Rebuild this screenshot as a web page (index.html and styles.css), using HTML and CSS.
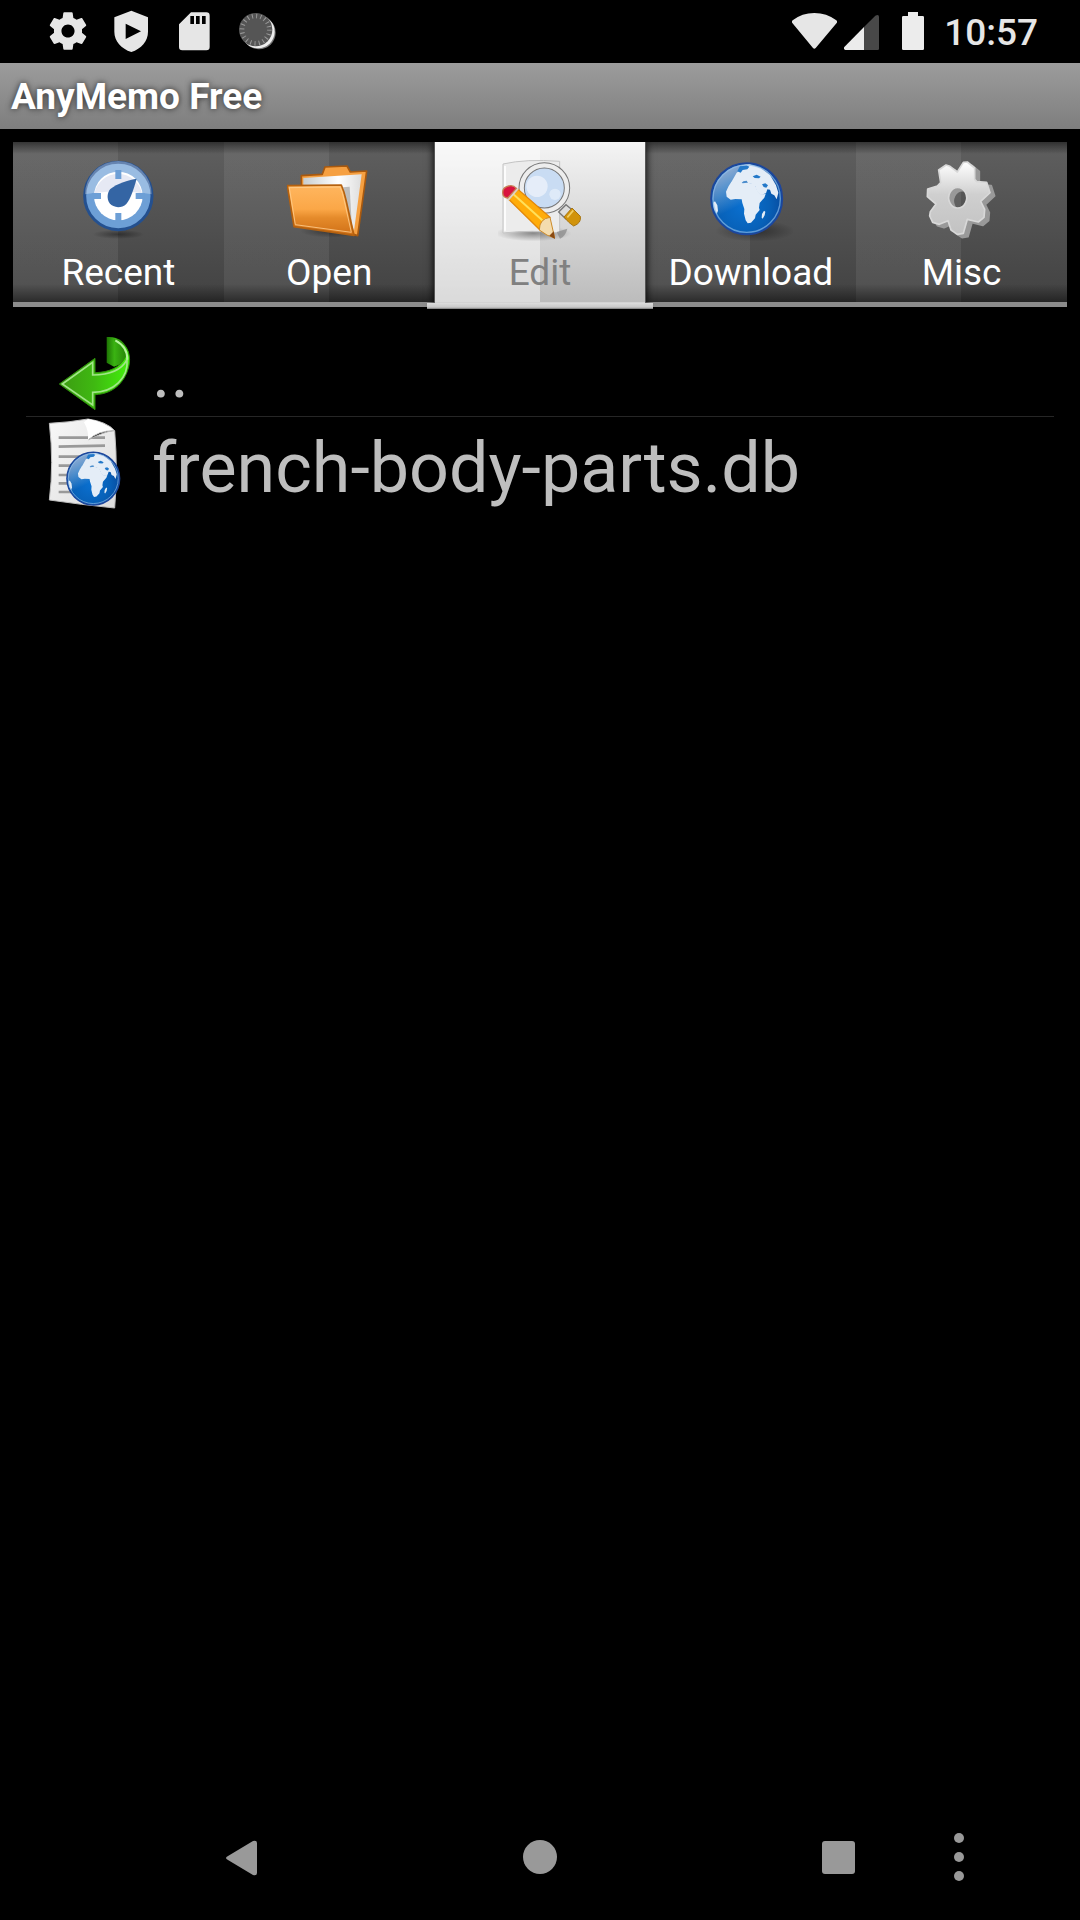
FILE: index.html
```html
<!DOCTYPE html>
<html lang="en">
<head>
<meta charset="utf-8">
<meta name="viewport" content="width=device-width, initial-scale=1">
<title>AnyMemo Free</title>
<link rel="stylesheet" href="styles.css">
</head>
<body>
<svg class="defs" width="0" height="0" aria-hidden="true">
  <defs>
    <radialGradient id="sea" cx="0.45" cy="0.6" r="0.6">
      <stop offset="0" stop-color="#0a70d0"/><stop offset="0.6" stop-color="#0861b8"/><stop offset="1" stop-color="#07479b"/>
    </radialGradient>
    <linearGradient id="gloss" x1="0.1" y1="0" x2="0.4" y2="0.6">
      <stop offset="0" stop-color="#fff" stop-opacity="0.65"/><stop offset="1" stop-color="#fff" stop-opacity="0"/>
    </linearGradient>
    <symbol id="globe" viewBox="207 81 252 252">
      <circle cx="320" cy="206" r="107" fill="url(#sea)" stroke="#1d469c" stroke-width="5"/>
      <circle cx="320" cy="206" r="103" fill="url(#gloss)"/>
      <path fill="#e4edf7" d="M266 168l8-12 22-3 12 7 14-2 22 4 8 20 10 11 15-1-4 11-14 16-2 14 2 7-12 14-2 11-12 13-10 2-6-9-5-20 1-14-6-18-2-11-19-1-14 2-12-9-2-15z"/>
      <path fill="#e4edf7" d="M366 252l6-10 4 3-2 11-6 10-3-3zM219 218l6-4 7 12 2 16-4 10-8-14zM290 128l12-9 8-5-6-8 24-3 34 11 28 21 18 31 7 22-5 20-7-12-9-5-4-12-8-1-4 12-16 5-12-12-4-14-12-8-10-2-4-7-10 2-6 6-14-2-10 6-8-4z"/>
      <path fill="#2479c9" d="M300 108l20-2 8 4-6 8-14 2-6 8-10-4zM338 139l12-5 12 6-5 5-13-1zM366 163l10-3 8 6-5 7-8-2z"/>
      <circle cx="320" cy="206" r="101" fill="none" stroke="#92bdea" stroke-width="4" opacity="0.65"/>
    </symbol>
    <linearGradient id="orange" x1="0" y1="0" x2="0" y2="1">
      <stop offset="0" stop-color="#ffb65f"/><stop offset="0.48" stop-color="#fba747"/><stop offset="0.65" stop-color="#e58b2b"/><stop offset="1" stop-color="#cf6f16"/>
    </linearGradient>
    <linearGradient id="paper" x1="0" y1="0" x2="1" y2="0">
      <stop offset="0" stop-color="#c9ced0"/><stop offset="0.6" stop-color="#fff"/><stop offset="1" stop-color="#ddd"/>
    </linearGradient>
    <linearGradient id="steel" x1="0" y1="0" x2="0" y2="1">
      <stop offset="0" stop-color="#fff"/><stop offset="0.45" stop-color="#cfcfcf"/><stop offset="1" stop-color="#c2c2c2"/>
    </linearGradient>
    <linearGradient id="green" x1="0" y1="0" x2="1" y2="0">
      <stop offset="0" stop-color="#3c9a13"/><stop offset="0.5" stop-color="#3fb911"/><stop offset="1" stop-color="#43f00c"/>
    </linearGradient>
    <linearGradient id="greenback" x1="0" y1="0" x2="1" y2="0">
      <stop offset="0" stop-color="#1d7404"/><stop offset="0.35" stop-color="#3ab312"/><stop offset="1" stop-color="#247d08"/>
    </linearGradient>
    <linearGradient id="sheet" x1="0" y1="0" x2="1" y2="1">
      <stop offset="0" stop-color="#f8f8f8"/><stop offset="1" stop-color="#dcdcdc"/>
    </linearGradient>
    <radialGradient id="shade">
      <stop offset="0" stop-color="#000" stop-opacity="0.4"/><stop offset="1" stop-color="#000" stop-opacity="0"/>
    </radialGradient>
  </defs>
</svg>

<div class="status">
  <div class="notices">
    <svg class="notice" viewBox="0.8 0.8 22.4 22.4" aria-hidden="true"><path fill="#e6e6e6" d="M19.43 12.98c.04-.32.07-.64.07-.98s-.03-.66-.07-.98l2.11-1.65c.19-.15.24-.42.12-.64l-2-3.46c-.12-.22-.39-.3-.61-.22l-2.49 1c-.52-.4-1.08-.73-1.69-.98l-.38-2.65C14.46 2.18 14.25 2 14 2h-4c-.25 0-.46.18-.49.42l-.38 2.65c-.61.25-1.17.59-1.69.98l-2.49-1c-.23-.09-.49 0-.61.22l-2 3.46c-.13.22-.07.49.12.64l2.11 1.65c-.04.32-.07.65-.07.98s.03.66.07.98l-2.11 1.65c-.19.15-.24.42-.12.64l2 3.46c.12.22.39.3.61.22l2.49-1c.52.4 1.08.73 1.69.98l.38 2.65c.03.24.24.42.49.42h4c.25 0 .46-.18.49-.42l.38-2.65c.61-.25 1.17-.59 1.69-.98l2.49 1c.23.09.49 0 .61-.22l2-3.46c.12-.22.07-.49-.12-.64l-2.11-1.65zM12 15.500c-1.93 0-3.500-1.570-3.500-3.500s1.570-3.500 3.500-3.500 3.500 1.570 3.500 3.500-1.570 3.500-3.500 3.500z"/></svg>
    <svg class="notice" viewBox="330 30 126 126" aria-hidden="true"><path fill="#e6e6e6" fill-rule="evenodd" d="M394 32l50 20v43c0 28-20 51-50 61-30-10-51-33-51-61V52zM377 71v46l46-23z"/></svg>
    <svg class="notice" viewBox="519 30 126 126" aria-hidden="true"><path fill="#e6e6e6" fill-rule="evenodd" d="M573 37h46q10 0 10 10v94q0 10-10 10h-72q-10 0-10-10V73zM571 48v24h11V48zM588 48v24h11V48zM606 48v24h11V48z"/></svg>
    <svg class="notice" viewBox="708 30 126 126" aria-hidden="true"><circle cx="777" cy="98" r="50" fill="#777"/><circle cx="774" cy="95" r="50" fill="#eee"/><circle cx="767" cy="89" r="50" fill="#555"/><circle cx="767" cy="89" r="41" fill="none" stroke="#999" stroke-width="14" stroke-dasharray="3 9.9"/></svg>
  </div>
  <div class="system">
    <svg class="wifi" viewBox="215 30 135 126" aria-hidden="true"><path fill="#e6e6e6" d="M217 61q28-22 65-22t66 22q4 4 1 8l-63 75q-4 5-8 0l-62-75q-3-4 1-8z"/></svg>
    <svg class="signal" viewBox="372 30 105 126" aria-hidden="true"><path fill="#484848" d="M432 81l34-34q11-6 11 4v95q0 4-4 4h-41z"/><path fill="#ececec" d="M432 81v69h-56q-7-2-3-9z"/></svg>
    <svg class="battery" viewBox="546 30 66 126" aria-hidden="true"><path fill="#ececec" d="M564 36h30v12h14q4 0 4 4v94q0 4-4 4h-58q-4 0-4-4V52q0-4 4-4h14z"/></svg>
    <time class="clock">10:57</time>
  </div>
</div>

<header class="title"><h1>AnyMemo Free</h1></header>

<main class="content">
  <nav class="tabs">
    <button class="tab" type="button">
      <svg class="tab-icon" viewBox="228 81 252 252" aria-hidden="true">
        <ellipse cx="355" cy="313" rx="78" ry="14" fill="url(#shade)"/>
        <circle cx="355" cy="198" r="101" fill="#6d9fd6" stroke="#24508f" stroke-width="9"/>
        <path d="M255 193a100 100 0 0 1 200 0q-100-20-200 0z" fill="#fff" opacity="0.3"/>
        <circle cx="355" cy="198" r="73" fill="#fff"/>
        <path d="M283 190a73 73 0 0 1 143 0q-72-12-143 0z" fill="#e6e9f4"/>
        <path d="M355 120v27M355 249v27M276 198h27M407 198h27" stroke="#6d9fd6" stroke-width="18"/>
        <path d="M410 146c-20 2-61 15-79 31-10 11-11 31-2 43 11 14 35 16 50 2 13-16 23-48 31-76z" fill="#3465a4"/>
      </svg>
      <span>Recent</span>
    </button>
    <button class="tab" type="button">
      <svg class="tab-icon" viewBox="216 81 252 252" aria-hidden="true">
        <ellipse cx="345" cy="303" rx="90" ry="20" fill="url(#shade)"/>
        <path d="M259 137l63-4 8-22 66-3 10 18 49-3-27 194-168-50z" fill="#f6a041" stroke="#a9590e" stroke-width="5" stroke-linejoin="round"/>
        <path d="M265 144l175-11-23 170-40-130-112 5z" fill="url(#paper)"/>
        <path d="M384 172l20-2 6 110z" fill="#999" opacity="0.6"/>
        <path d="M217 167l162-2q8 18 14 45l24 106-180-26z" fill="url(#orange)" stroke="#b5610f" stroke-width="5" stroke-linejoin="round"/>
        <path d="M223 173l152-2q8 16 13 42l21 94-168-23z" fill="none" stroke="#ffd091" stroke-width="3" opacity="0.8"/>
      </svg>
      <span>Open</span>
    </button>
    <button class="tab tab-selected" type="button" aria-current="page">
      <svg class="tab-icon" viewBox="234 81 252 252" aria-hidden="true">
        <ellipse cx="340" cy="310" rx="115" ry="24" fill="url(#shade)"/>
        <path d="M249 102q70-16 170-8v215q-80-10-170 0z" fill="#ececec" stroke="#c4c4c4" stroke-width="3"/>
        <path d="M255 108v194" stroke="#fff" stroke-width="5"/>
        <path d="M410 306l32-10q-6 24-22 30z" fill="#888" opacity="0.7"/>
        <path d="M416 246l22-22 20 17-21 25z" fill="#ddd" stroke="#777" stroke-width="4"/>
        <path d="M432 261l24-27 25 25q4 20-20 29-14-8-29-27z" fill="#d1930b" stroke="#a87510" stroke-width="3"/>
        <path d="M442 262l18-21" stroke="#f1ce66" stroke-width="5"/>
        <circle cx="373" cy="174" r="68" fill="#c9dcf3" stroke="#777" stroke-width="19"/>
        <circle cx="373" cy="174" r="68" fill="none" stroke="#ededed" stroke-width="13"/>
        <circle cx="351" cy="169" r="32" fill="#edf3fb" opacity="0.75"/><circle cx="405" cy="193" r="17" fill="#edf3fb" opacity="0.6"/>
        <path d="M266 208l28-30 96 84-30 38z" fill="#ffac0a" stroke="#e38709" stroke-width="4"/>
        <path d="M277 190l99 89" stroke="#ffe15b" stroke-width="6"/>
        <path d="M358 300q0-34 32-38l14 62q-22-5-46-24z" fill="#f4dcae" stroke="#cc8b2a" stroke-width="3"/>
        <path d="M388 317l13-13 4 23z" fill="#8a4a12"/>
        <path d="M266 212l30-34-8-7-31 30z" fill="#ddd3c8"/>
        <path d="M250 197q-7-21 12-28 17-6 27 6l-26 29q-8 0-13-7z" fill="#d9123f" stroke="#c67f53" stroke-width="4"/>
      </svg>
      <span>Edit</span>
    </button>
    <button class="tab" type="button">
      <svg class="tab-icon" viewBox="207 81 252 252" aria-hidden="true">
        <ellipse cx="345" cy="303" rx="120" ry="32" fill="url(#shade)"/>
        <use href="#globe" x="207" y="81" width="252" height="252"/>
      </svg>
      <span>Download</span>
    </button>
    <button class="tab" type="button">
      <svg class="tab-icon" viewBox="210 81 252 252" aria-hidden="true">
        <defs><path id="cog" fill-rule="evenodd" stroke-linejoin="round" stroke-width="5" d="M266 120L288 105L300 109L322 126L340 97L352 96L374 114L374 148L380 155L410 157L420 188L392 214L404 238L402 262L385 276L352 268L340 310L322 313L303 300L294 272L268 283L248 277L239 258L241 245L258 222L232 200L233 177L262 168L272 158ZM323 172a27 31 0 1 0 .1 0z"/></defs>
        <use href="#cog" x="14" y="10" fill="#999" stroke="#999"/>
        <use href="#cog" fill="url(#steel)" stroke="#d8d8d8"/>
      </svg>
      <span>Misc</span>
    </button>
  </nav>

  <ul class="files">
    <li><a class="file" href="#up">
      <svg class="file-icon" viewBox="138 36 270 282" aria-hidden="true">
        <path d="M320 81q50-4 66 46-10 34-44 43l-22-12z" fill="url(#greenback)"/>
        <path d="M178 222l107-77v43c42-1 77-16 91-47 5-18-9-39-32-51 36 7 48 40 44 70-8 52-45 92-103 94v45z" fill="url(#green)" stroke="#2e8d0b" stroke-width="3"/>
        <path d="M187 222l91-65v38c52 0 88-17 103-46 5 55-40 98-103 98v38z" fill="none" stroke="#a1e688" stroke-width="5"/>
        <path d="M346 91q37 20 36 58" fill="none" stroke="#b4f59e" stroke-width="6"/>
      </svg>
      <span>..</span></a></li>
    <li><a class="file" href="#french-body-parts">
      <svg class="file-icon" viewBox="138 321 270 282" aria-hidden="true">
        <path d="M148 340q60-3 116-13 56 8 80 35 10 120 0 232-100-10-196-24 14-110 0-230z" fill="url(#sheet)" stroke="#bdbdbd" stroke-width="3"/>
        <path d="M176 383h139M176 410l139-3M176 440h125M176 467h90M176 495h60M176 520h60M176 546h70" stroke="#999" stroke-width="8"/>
        <path d="M252 337q15 27 12 52 33-27 78-27-28-26-78-35z" fill="#fff"/>
        <path d="M266 389q28-27 76-27-28 2-76 27z" stroke="#bbb" stroke-width="3"/>
        <use href="#globe" x="196" y="413" width="187" height="187"/>
      </svg>
      <span>french-body-parts.db</span></a></li>
  </ul>
</main>

<footer class="navbar">
  <button class="key key-back" type="button" aria-label="Back"><svg viewBox="0 0 48 48"><path d="M11 23L36 8q4-1 4 2v30q0 3-4 2L11 27q-4-2 0-4z"/></svg></button>
  <button class="key key-home" type="button" aria-label="Home"><svg viewBox="0 0 48 48"><circle cx="24" cy="24" r="17"/></svg></button>
  <button class="key key-recents" type="button" aria-label="Recent apps"><svg viewBox="0 0 48 48"><rect x="8" y="8" width="33" height="33" rx="3"/></svg></button>
  <button class="key key-menu" type="button" aria-label="Menu"><svg viewBox="0 0 48 48"><circle cx="24" cy="5" r="5"/><circle cx="24" cy="24" r="5"/><circle cx="24" cy="43" r="5"/></svg></button>
</footer>
</body>
</html>
```
FILE: styles.css
```css
* { box-sizing: border-box; }

body {
  margin: 0;
  min-height: 100vh;
  display: flex;
  flex-direction: column;
  background: #000;
  color: #fff;
  font-family: Roboto, sans-serif;
  font-size: 37px;
}

button {
  border: 0;
  padding: 0;
  background: none;
  color: inherit;
  font: inherit;
}

svg { display: block; }
.defs { position: absolute; }

.status {
  display: flex;
  justify-content: space-between;
  align-items: center;
  height: 63px;
  padding: 0 42px 1px 47px;
}
.notices { display: flex; gap: 21px; }
.notice { width: 42px; height: 42px; }
.system { display: flex; align-items: center; }
.wifi { width: 45px; height: 42px; margin-right: 7px; }
.signal { width: 35px; height: 42px; margin-right: 23px; }
.battery { width: 22px; height: 42px; margin-right: 20px; }
.clock { color: #e6e6e6; font-weight: 500; line-height: 42px; padding-top: 4px; }

.title {
  height: 66px;
  padding: 1px 11px 0;
  background: linear-gradient(#9c9c9c, #7e7e7e);
}
.title h1 {
  margin: 0;
  font-size: 37px;
  line-height: 66px;
  font-weight: 700;
  text-shadow: 0 0 6px rgba(0, 0, 0, 0.7);
}

.content { flex: 1; padding: 13px; }

.tabs {
  display: grid;
  grid-template-columns: repeat(5, 1fr);
}
.tab {
  position: relative;
  display: flex;
  flex-direction: column;
  align-items: center;
  height: 165px;
  padding-top: 15px;
  border-bottom: 5px solid #8c8c8c;
  background:
    linear-gradient(rgba(0, 0, 0, 0.5), transparent 12px, transparent 142px, rgba(0, 0, 0, 0.45)),
    linear-gradient(90deg, rgba(255, 255, 255, 0.07) 50%, transparent 50%),
    linear-gradient(#5f5f5f, #424242);
}
.tab-icon { width: 84px; height: 84px; }
.tab span { margin-top: 11px; line-height: 42px; }

.tab-selected {
  margin: 0 -1px;
  border-right: 1px solid #555;
  border-left: 1px solid #555;
  border-bottom-color: #d2d2d2;
  background:
    linear-gradient(90deg, rgba(255, 255, 255, 0.45) 50%, transparent 50%),
    linear-gradient(#f4f4f4, #bcbcbc);
  color: #808080;
  box-shadow: 0 0 8px #000;
  z-index: 1;
}
/* the bright base line reaches a little under both neighbours */
.tab-selected::after {
  content: "";
  position: absolute;
  right: -8px;
  bottom: -7px;
  left: -8px;
  height: 6px;
  background: linear-gradient(#dcdcdc, #c8c8c8 70%, #777);
}

.files {
  margin: 0;
  padding: 15px 13px 0;
  list-style: none;
}
.files li + li { border-top: 1px solid #262626; }
.file {
  display: flex;
  gap: 16px;
  padding-left: 20px;
  color: #bebebe;
  font-size: 70px;
  line-height: 86px;
  text-decoration: none;
}
.file-icon { width: 90px; height: 94px; }
.file span { padding-top: 8px; }

.navbar {
  display: grid;
  grid-template-columns: 217fr 48px 251fr 48px 250fr 48px 73fr 48px 97fr;
  align-items: center;
  height: 126px;
}
.key svg { width: 48px; height: 48px; fill: #999; }
.key-back { grid-column: 2; }
.key-home { grid-column: 4; }
.key-recents { grid-column: 6; }
.key-menu { grid-column: 8; }
```
